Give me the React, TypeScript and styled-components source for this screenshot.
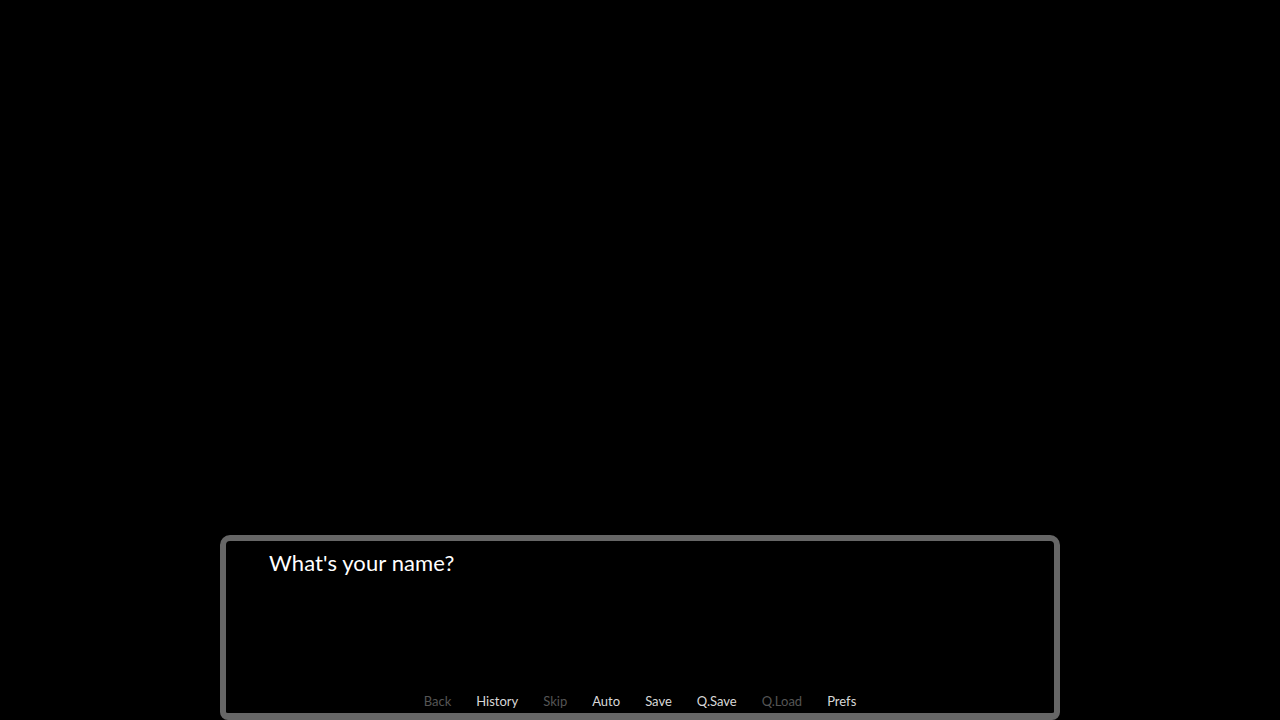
import styled, { createGlobalStyle } from "styled-components";

const GlobalStyle = createGlobalStyle`
    html, body {
        margin: 0;
        padding: 0;
        background: #000;
    }
    body {
        font-family: "DejaVu Sans", sans-serif;
    }
`;

/* ------------------- layout ------------------- */
const Screen = styled.div`
    width: 1280px;
    height: 720px;
    background: #000;
    display: flex;
    flex-direction: column;
    justify-content: flex-end;
    align-items: center;
    overflow: hidden;
`;

const TextBox = styled.div`
    box-sizing: border-box;
    width: 840px;
    height: 185px;
    border: 6px solid #666666;
    border-bottom-width: 7px;
    border-radius: 10px 10px 8px 8px;
    background: #000;
    display: flex;
    flex-direction: column;
    padding: 8px 0 0 43px;
`;

const Dialogue = styled.div`
    font-family: "Lato", "DejaVu Sans", sans-serif;
    font-size: 22px;
    line-height: 28px;
    color: #ffffff;
    letter-spacing: 0.1px;
`;

const QuickMenu = styled.div`
    margin-top: auto;
    margin-left: -43px;
    display: flex;
    justify-content: center;
    padding-bottom: 3px;
`;

const QuickButton = styled.span<{ $disabled?: boolean }>`
    font-family: "Lato", "DejaVu Sans", sans-serif;
    font-size: 13px;
    line-height: 18px;
    color: ${(p) => (p.$disabled ? "#555555" : "#d8d8d8")};
    padding: 0 12.5px;
    cursor: ${(p) => (p.$disabled ? "default" : "pointer")};
`;

const buttons = [
    { label: "Back", disabled: true },
    { label: "History" },
    { label: "Skip", disabled: true },
    { label: "Auto" },
    { label: "Save" },
    { label: "Q.Save" },
    { label: "Q.Load", disabled: true },
    { label: "Prefs" },
];

export default function App() {
    return (
        <>
            <GlobalStyle />
            <Screen>
                <TextBox>
                    <Dialogue>What's your name?</Dialogue>
                    <QuickMenu>
                        {buttons.map((b) => (
                            <QuickButton key={b.label} $disabled={b.disabled}>
                                {b.label}
                            </QuickButton>
                        ))}
                    </QuickMenu>
                </TextBox>
            </Screen>
        </>
    );
}
